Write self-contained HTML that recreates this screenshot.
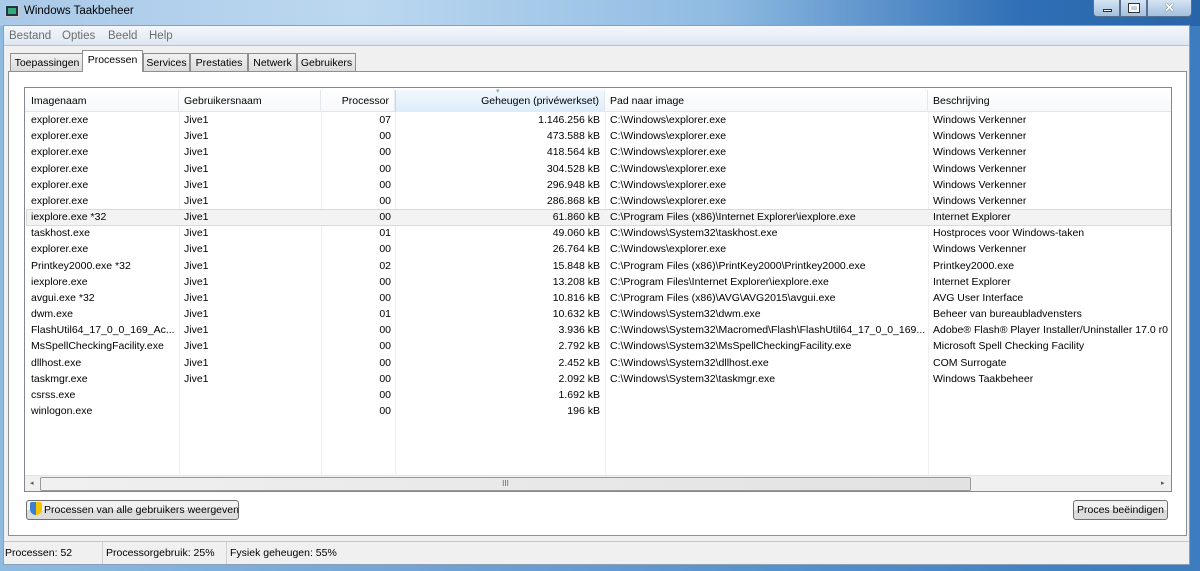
<!DOCTYPE html>
<html><head><meta charset="utf-8"><style>
*{margin:0;padding:0;box-sizing:border-box}
body{width:1200px;height:571px;overflow:hidden;background:#3b77b8;font-family:"Liberation Sans",sans-serif;font-size:10.5px;color:#000;position:relative}
.abs{position:absolute}
#title{left:0;top:0;width:1200px;height:26px;background:linear-gradient(90deg,#a9c9e8 0%,#bcd8f0 30%,#8fbbe2 60%,#2f6fb6 85%,#2a64a8 100%)}
#frame{left:0;top:24px;width:1200px;height:547px;background:linear-gradient(90deg,#8fbbe0,#3e7cc0 95%)}
#win{left:3px;top:25px;width:1187px;height:540px;background:#f0f0f0;border:1px solid #8aa0b8}
#menu{left:0;top:0;width:1185px;height:20px;background:linear-gradient(#f4f7fb,#dde7f2);border-bottom:1px solid #b6c3d2}
#menu span{position:absolute;top:4px;color:#6d6d6d;font-size:11.5px}
.tab{position:absolute;top:27px;height:19px;border:1px solid #8e8f8f;border-bottom:none;background:linear-gradient(#f2f2f2,#dadada);padding:3px 0 0;font-size:10.5px;text-align:center;white-space:nowrap;overflow:hidden}
#panel{left:4px;top:45px;width:1179px;height:465px;background:#fff;border:1px solid #8e8f8f}
#list{left:20px;top:61px;width:1148px;height:405px;background:#fff;border:1px solid #828790;overflow:hidden}
.h{position:absolute;top:2px;height:22px;line-height:22px;border-right:1px solid #e3e7ee;white-space:nowrap}
.row{position:absolute;left:0;width:1146px;height:16px;line-height:16px}
.row span{position:absolute;white-space:nowrap;overflow:hidden}
.vl{position:absolute;top:24px;height:363px;width:1px;background:#f0f0f0}
.btn{position:absolute;height:20px;border:1px solid #707070;border-radius:3px;background:linear-gradient(#f2f2f2 50%,#dcdcdc 50%);line-height:18px;font-size:10.5px;white-space:nowrap}
#status{left:0;top:515px;width:1185px;height:23px;border-top:1px solid #c5c5c5;line-height:22px;font-size:10.5px}
#status span{position:absolute;top:0}
</style></head><body>
<div id="frame" class="abs"></div>
<div id="title" class="abs">
 <div class="abs" style="left:5px;top:5px;width:14px;height:12px;background:#234;border:1px solid #ccc"><div style="margin:2px;height:6px;background:#3a7;"></div></div>
 <div class="abs" style="left:24px;top:5px;font-size:11.5px;color:#000">Windows Taakbeheer</div>
 <div class="abs" style="left:1093px;top:0;width:27px;height:17px;border:1px solid #56708f;border-top:none;border-radius:0 0 0 4px;background:linear-gradient(#d5e4f3,#a3c0de)"><div style="position:absolute;left:9px;top:9px;width:9px;height:3px;background:#fff;border:1px solid #333"></div></div>
 <div class="abs" style="left:1120px;top:0;width:27px;height:17px;border:1px solid #56708f;border-top:none;background:linear-gradient(#d5e4f3,#a3c0de)"><div style="position:absolute;left:8px;top:4px;width:10px;height:8px;border:2px solid #fff;outline:1px solid #333"></div></div>
 <div class="abs" style="left:1147px;top:0;width:45px;height:17px;border:1px solid #56708f;border-top:none;border-radius:0 0 4px 0;background:linear-gradient(#d5e4f3,#a3c0de);color:#fff;font-weight:bold;text-align:center;font-size:13px;line-height:15px;text-shadow:0 0 1px #000">✕</div>
</div>
<div id="win" class="abs">
 <div id="menu" class="abs"><span style="left:5px">Bestand</span><span style="left:58px">Opties</span><span style="left:104px">Beeld</span><span style="left:145px">Help</span></div>
 <div class="tab" style="left:6px;width:74px">Toepassingen</div>
 <div class="tab" style="left:78px;top:24px;height:22px;width:61px;background:#fff;z-index:2;border-color:#8e8f8f">Processen</div>
 <div class="tab" style="left:139px;width:47px">Services</div>
 <div class="tab" style="left:186px;width:58px">Prestaties</div>
 <div class="tab" style="left:244px;width:49px">Netwerk</div>
 <div class="tab" style="left:293px;width:59px">Gebruikers</div>
 <div id="panel" class="abs"></div>
 <div id="list" class="abs">
  <div class="abs" style="left:0;top:0;width:1146px;height:24px;background:linear-gradient(#fff,#f7f8fa);border-bottom:1px solid #e5e5e5"></div>
  <div class="h" style="left:0;width:154px;padding-left:6px">Imagenaam</div>
  <div class="h" style="left:154px;width:142px;padding-left:5px">Gebruikersnaam</div>
  <div class="h" style="left:296px;width:74px;text-align:right;padding-right:5px">Processor</div>
  <div class="h" style="left:370px;width:210px;text-align:right;padding-right:5px;background:linear-gradient(#f2f8fd,#dcecf9);border-left:1px solid #c4dcf0"><div style="position:absolute;left:100px;top:-2px;color:#8aa;font-size:7px;line-height:8px">▾</div>Geheugen (privéwerkset)</div>
  <div class="h" style="left:580px;width:323px;padding-left:5px">Pad naar image</div>
  <div class="h" style="left:903px;width:243px;padding-left:5px;border:none">Beschrijving</div>
  <div class="vl" style="left:154px"></div><div class="vl" style="left:296px"></div><div class="vl" style="left:370px"></div><div class="vl" style="left:580px"></div><div class="vl" style="left:903px"></div>
  <div class="abs" style="left:1px;top:121px;width:1145px;height:17px;background:#f3f3f3;border:1px solid #dadada"></div>
  <div id="rows"></div>
  <div class="abs" style="left:0;top:387px;width:1146px;height:16px;background:#f0f0f0;border-top:1px solid #e6e6e6">
   <div class="abs" style="left:5px;top:3px;font-size:7px;color:#555">◂</div>
   <div class="abs" style="left:1136px;top:3px;font-size:7px;color:#555">▸</div>
   <div class="abs" style="left:15px;top:1px;width:931px;height:14px;border:1px solid #999;border-radius:2px;background:linear-gradient(90deg,#f0f0f0,#e2e2e2);text-align:center;font-size:8px;line-height:12px;color:#666">III</div>
  </div>
 </div>
 <div class="btn" style="left:22px;top:474px;width:213px;padding-left:3px"><span style="display:inline-block;width:12px;height:13px;vertical-align:-2px;background:linear-gradient(90deg,#3a7fd0 50%,#f3c400 50%);border-radius:2px 2px 6px 6px;margin-right:2px"></span>Processen van alle gebruikers weergeven</div>
 <div class="btn" style="left:1069px;top:474px;width:95px;text-align:center">Proces beëindigen</div>
 <div id="status" class="abs">
  <span style="left:1px">Processen: 52</span>
  <span style="left:98px;width:1px;height:22px;background:#d0d0d0"></span>
  <span style="left:102px">Processorgebruik: 25%</span>
  <span style="left:222px;width:1px;height:22px;background:#d0d0d0"></span>
  <span style="left:226px">Fysiek geheugen: 55%</span>
 </div>
</div>
<script>
var d=[
["explorer.exe","Jive1","07","1.146.256 kB","C:\\Windows\\explorer.exe","Windows Verkenner"],
["explorer.exe","Jive1","00","473.588 kB","C:\\Windows\\explorer.exe","Windows Verkenner"],
["explorer.exe","Jive1","00","418.564 kB","C:\\Windows\\explorer.exe","Windows Verkenner"],
["explorer.exe","Jive1","00","304.528 kB","C:\\Windows\\explorer.exe","Windows Verkenner"],
["explorer.exe","Jive1","00","296.948 kB","C:\\Windows\\explorer.exe","Windows Verkenner"],
["explorer.exe","Jive1","00","286.868 kB","C:\\Windows\\explorer.exe","Windows Verkenner"],
["iexplore.exe *32","Jive1","00","61.860 kB","C:\\Program Files (x86)\\Internet Explorer\\iexplore.exe","Internet Explorer"],
["taskhost.exe","Jive1","01","49.060 kB","C:\\Windows\\System32\\taskhost.exe","Hostproces voor Windows-taken"],
["explorer.exe","Jive1","00","26.764 kB","C:\\Windows\\explorer.exe","Windows Verkenner"],
["Printkey2000.exe *32","Jive1","02","15.848 kB","C:\\Program Files (x86)\\PrintKey2000\\Printkey2000.exe","Printkey2000.exe"],
["iexplore.exe","Jive1","00","13.208 kB","C:\\Program Files\\Internet Explorer\\iexplore.exe","Internet Explorer"],
["avgui.exe *32","Jive1","00","10.816 kB","C:\\Program Files (x86)\\AVG\\AVG2015\\avgui.exe","AVG User Interface"],
["dwm.exe","Jive1","01","10.632 kB","C:\\Windows\\System32\\dwm.exe","Beheer van bureaubladvensters"],
["FlashUtil64_17_0_0_169_Ac...","Jive1","00","3.936 kB","C:\\Windows\\System32\\Macromed\\Flash\\FlashUtil64_17_0_0_169...","Adobe® Flash® Player Installer/Uninstaller 17.0 r0"],
["MsSpellCheckingFacility.exe","Jive1","00","2.792 kB","C:\\Windows\\System32\\MsSpellCheckingFacility.exe","Microsoft Spell Checking Facility"],
["dllhost.exe","Jive1","00","2.452 kB","C:\\Windows\\System32\\dllhost.exe","COM Surrogate"],
["taskmgr.exe","Jive1","00","2.092 kB","C:\\Windows\\System32\\taskmgr.exe","Windows Taakbeheer"],
["csrss.exe","","00","1.692 kB","",""],
["winlogon.exe","","00","196 kB","",""]];
var h="";d.forEach(function(r,i){var t=24+i*16.17;
h+='<div class="row" style="top:'+t+'px"><span style="left:6px;max-width:146px">'+r[0]+'</span><span style="left:159px">'+r[1]+'</span><span style="right:780px">'+r[2]+'</span><span style="right:571px">'+r[3]+'</span><span style="left:585px;max-width:316px">'+r[4]+'</span><span style="left:908px">'+r[5]+'</span></div>';});
document.getElementById("rows").innerHTML=h;
</script>
</body></html>
